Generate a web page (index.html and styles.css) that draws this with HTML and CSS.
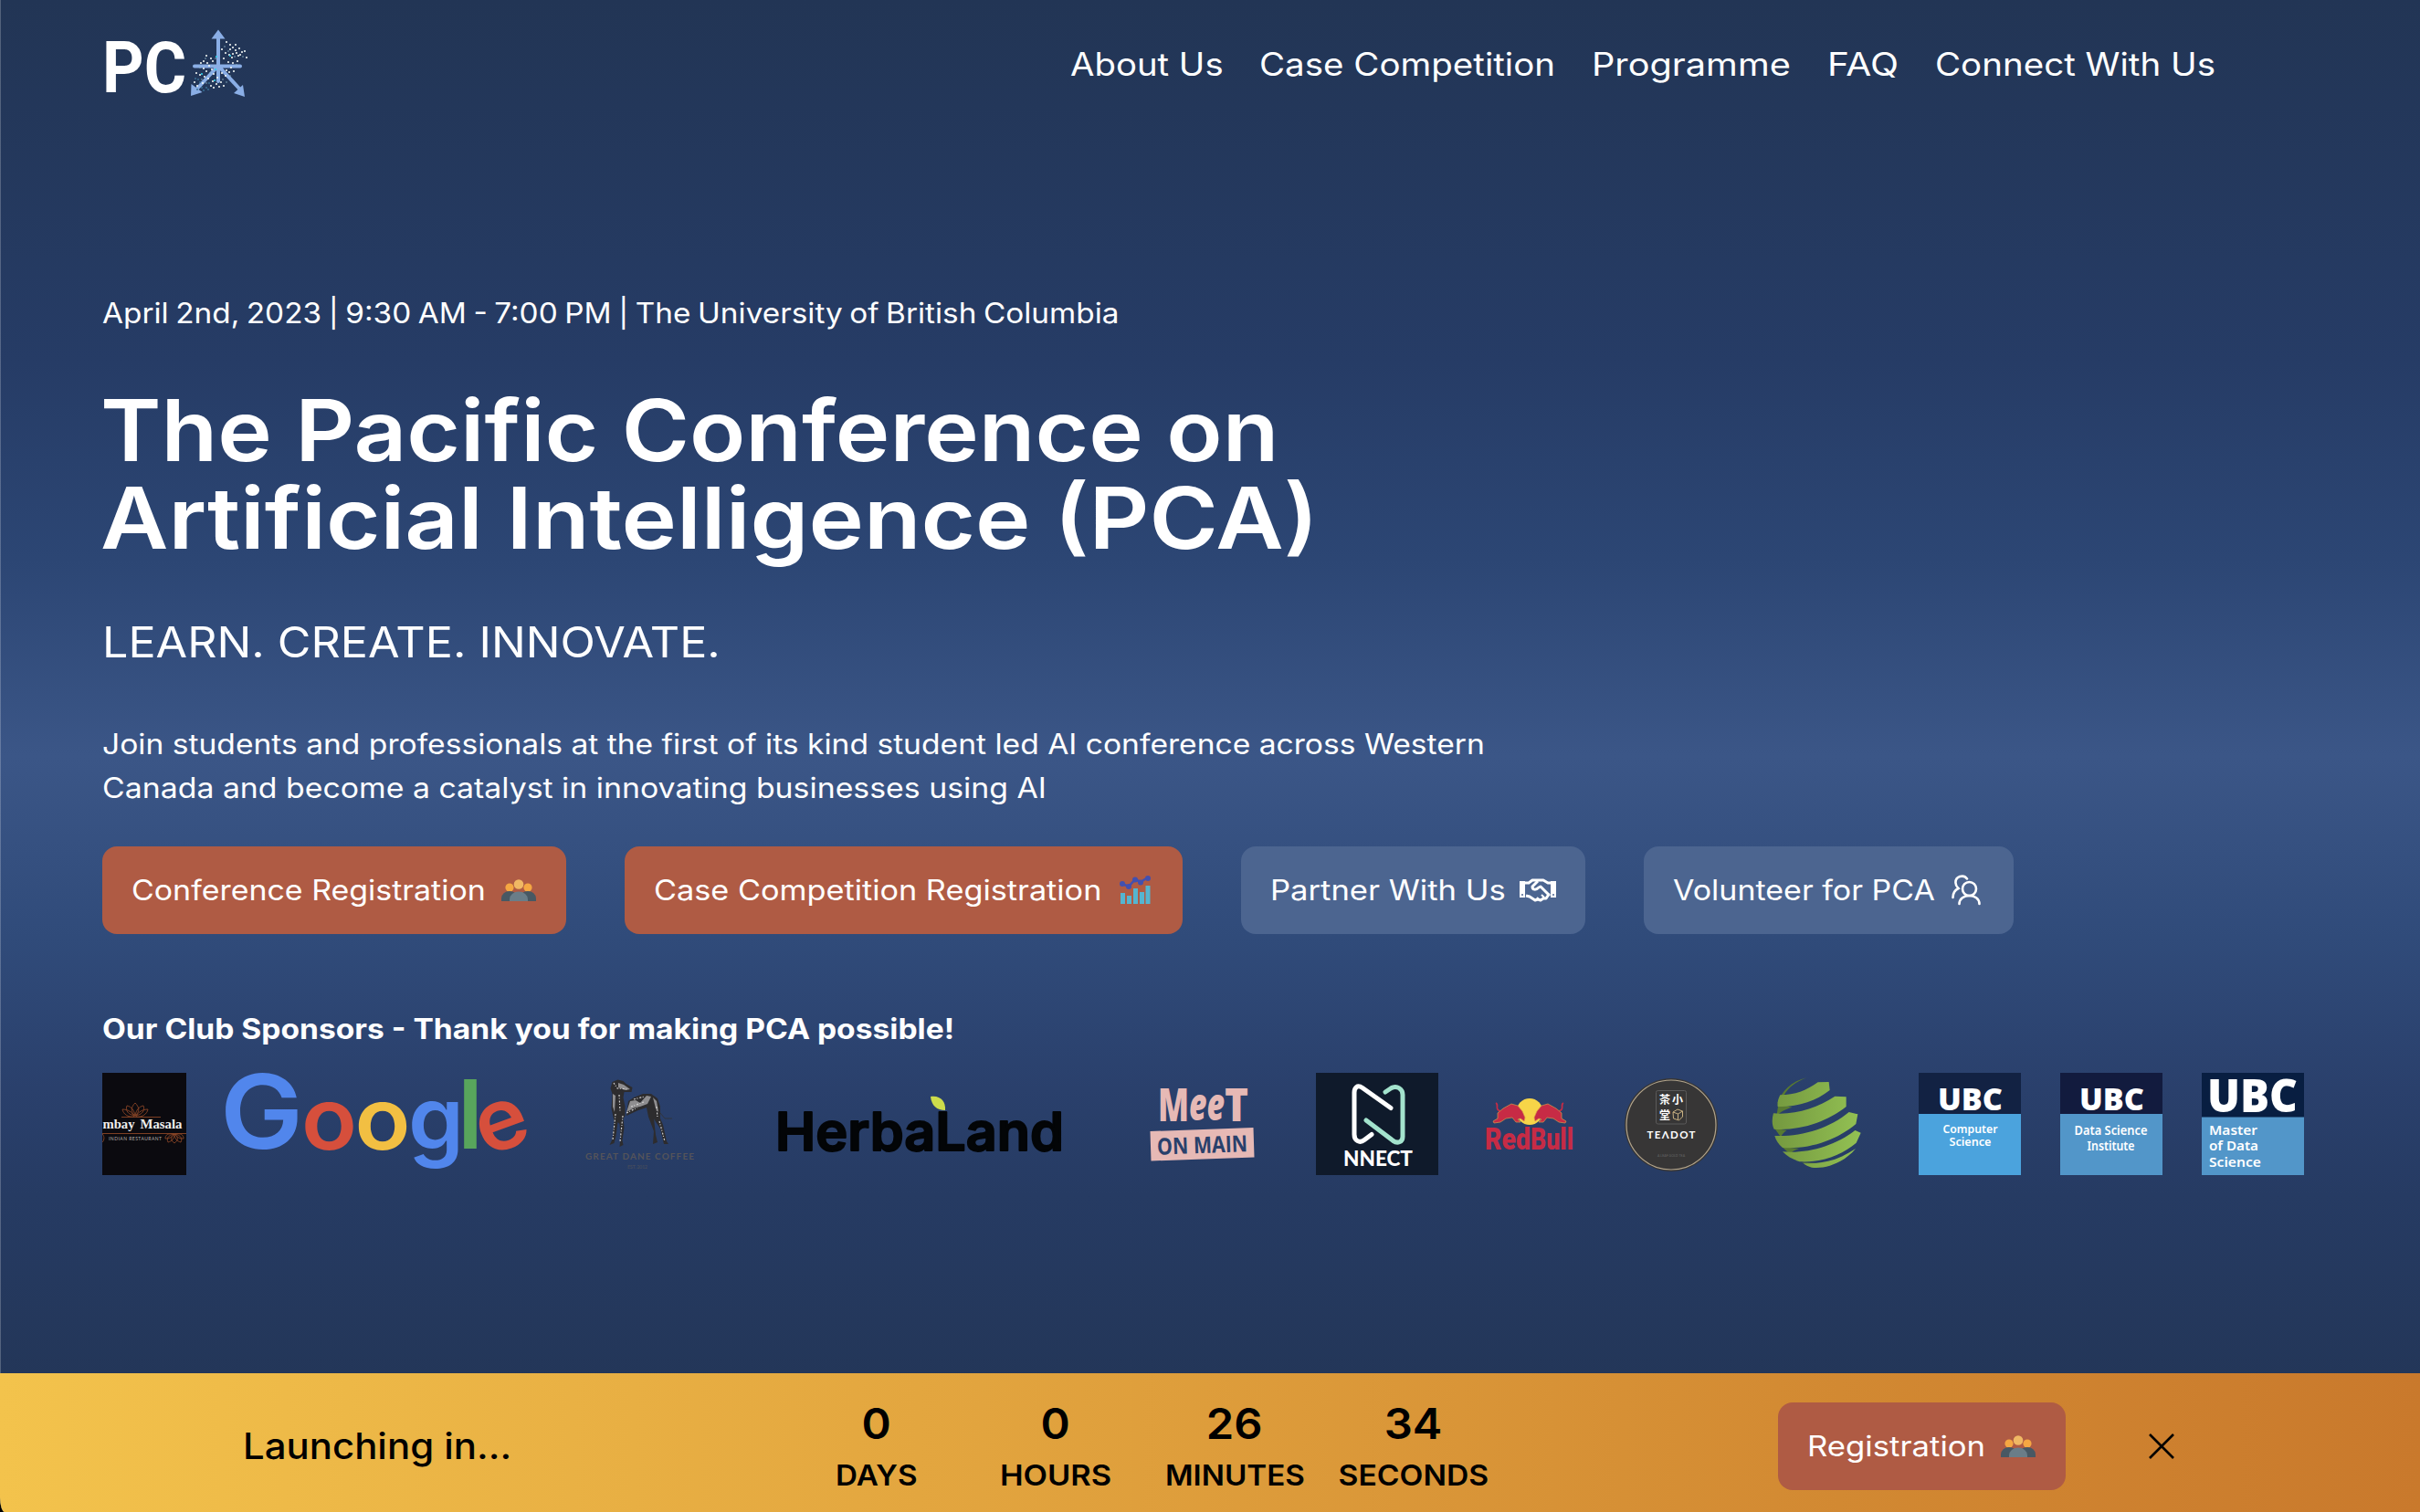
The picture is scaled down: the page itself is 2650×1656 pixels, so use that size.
FILE: index.html
```html
<!DOCTYPE html>
<html lang="en">
<head>
<meta charset="utf-8">
<title>Pacific Conference on Artificial Intelligence</title>
<link rel="stylesheet" href="styles.css">
</head>
<body>
<svg class="defs" aria-hidden="true">
  <symbol id="people" viewBox="0 0 38 24">
    <circle cx="9" cy="9" r="4.6" fill="#f5a742"/><circle cx="29" cy="9" r="4.6" fill="#f5a742"/>
    <path d="M0 24v-3a9 8 0 0 1 18 0v3zM20 24v-3a9 8 0 0 1 18 0v3z" fill="#485863"/>
    <circle cx="19" cy="5.5" r="5.3" fill="#f0b864"/>
    <path d="M9 24v-2a10 8.500 0 0 1 20 0v2z" fill="#6a7d88"/>
  </symbol>
</svg>
<div class="page">
  <header class="header">
    <svg class="logo" viewBox="112 28 160 84">
      <text x="112" y="100.500" font-size="77" textLength="92" lengthAdjust="spacingAndGlyphs" class="logo-text">PC</text>
      <g stroke="#8aaee6" stroke-width="4" fill="none" stroke-linecap="round">
        <path d="M239 40V89M213 72.500H263M239 72L216 97M239 72L262 97"/>
      </g>
      <g fill="#8aaee6"><path d="M239 32.500l7.500 10h-15zM209 105l.500-13 12 9zM268 106l-12-4 10-9z"/></g>
      <g fill="none" stroke-linecap="round">
        <path stroke="#f2f7f4" stroke-width="2.100" d="M248 46h0M252 49h0M258 49h0M243 54h0M252 54h0M255 52h0M258 55h0M262 53h0M247 58h0M251 60h0M255 59h0M259 58h0M263 60h0M265 57h0M270 63h0M268 56h0M261 61h0M254 63h0M245 64h0M226 61h0M231 64h0M223 67h0M220 69h0M227 69h0M233 67h0M229 72h0M223 75h0M226 78h0M215 80h0M219 82h0M224 84h0M232 76h0M234 81h0M238 85h0M243 80h0M247 83h0M228 86h0M233 89h0M237 92h0M231 94h0M234 96h0M240 95h0M245 94h0M242 90h0M248 77h0M253 74h0M251 79h0M256 78h0M250 68h0M255 69h0M260 67h0M213 90h0M216 94h0M222 91h0"/>
        <path stroke="#8fb6c8" stroke-width="1.500" d="M246 51h0M250 56h0M257 62h0M266 62h0M225 64h0M236 64h0M219 74h0M230 80h0M221 87h0M226 91h0M244 87h0M240 77h0M252 83h0M259 71h0M248 90h0M234 72h0"/>
        <path stroke="#2fd0ea" stroke-width="2.200" d="M237 62h0M221 81h0M236 76h0M252 61h0M235 88h0"/>
        <path stroke="#397195" stroke-width="2" d="M214 86h0M219 90h0M216 98h0M221 96h0M226 96h0M229 91h0M223 99h0M228 98h0M217 87h0"/>
      </g>
    </svg>
    <nav class="nav">
      <a class="n1"><span>About Us</span></a><a class="n2"><span>Case Competition</span></a><a class="n3"><span>Programme</span></a><a class="n4"><span>FAQ</span></a><a class="n5"><span>Connect With Us</span></a>
    </nav>
  </header>
  <main class="hero">
    <p class="date"><span>April 2nd, 2023 | 9:30 AM - 7:00 PM | The University of British Columbia</span></p>
    <h1><span class="line1">The Pacific Conference on</span><br><span class="line2">Artificial Intelligence (PCA)</span></h1>
    <p class="tagline"><span>LEARN. CREATE. INNOVATE.</span></p>
    <p class="intro"><span class="line1">Join students and professionals at the first of its kind student led AI conference across Western</span><br><span class="line2">Canada and become a catalyst in innovating businesses using AI</span></p>
    <div class="actions">
      <a class="btn b1"><span>Conference Registration</span><svg width="38" height="24"><use href="#people"/></svg></a>
      <a class="btn b2"><span>Case Competition Registration</span><svg width="34" height="32" viewBox="0 0 34 32"><path d="M1 31V19h5v12zM8 31v-9h5v9zM15 31V14h5v17zM22 31V18h5v13zM28.500 31V11h5v20z" fill="#55b5d0"/><path d="M3 9l7 3 7-8 6 3 8-5" fill="none" stroke="#4250b0" stroke-width="2.600"/><g fill="#4250b0"><circle cx="3" cy="9" r="3"/><circle cx="10" cy="12" r="3"/><circle cx="17" cy="4.500" r="3"/><circle cx="23" cy="7.500" r="3"/><circle cx="31" cy="3" r="3"/></g></svg></a>
      <a class="btn soft b3"><span>Partner With Us</span><svg width="40" height="26" viewBox="0 0 40 26"><g fill="none" stroke="#fff" stroke-width="3" stroke-linejoin="round"><path d="M10 5l4-3h12l5 3h7M7 19l4 1 6 4 3-1 3 1 3-2h3l2-3 2-2M2 5h9"/><path d="M20 3l-6 6c0 4 4 4 7 1l2-1 9 9"/><path d="M19 21l2 2M24 18l3 3" stroke-width="2"/></g><path d="M0 3h6v18H0zM34 3h6v18h-6z" fill="#fff"/><circle cx="3" cy="18" r="1" fill="#4c6590"/><circle cx="37" cy="18" r="1" fill="#4c6590"/></svg></a>
      <a class="btn soft b4"><span>Volunteer for PCA</span><svg width="32" height="34" viewBox="0 0 32 34"><g fill="none" stroke="#fff" stroke-width="2.600" stroke-linecap="round"><circle cx="19.500" cy="15.500" r="7.500"/><path d="M8.500 32c0-12 22-12 22 0"/><path d="M17 4.500C13-1 4 2 4.500 9c0 3 1 4 3 6-4 2-6 5-6 10"/></g></svg></a>
    </div>
    <h2><span>Our Club Sponsors - Thank you for making PCA possible!</span></h2>
    <div class="sponsors">
      <svg width="92" height="112" viewBox="112 1175 92 112"><rect x="112" y="1175" width="92" height="112" fill="#0b0a0f"/>
        <g fill="none" stroke="#8a4526" stroke-width=".9"><path d="M133 1223.500H176M112 1241.500H204"/><path d="M148 1222c-6-5-4-10 0-14 4 4 6 9 0 14zM148 1222c-8-1-11-6-9-11 5 1 8 5 9 11zM148 1222c8-1 11-6 9-11-5 1-8 5-9 11zM147 1223c-7 1-12-3-13-8 6 0 11 3 13 8zM149 1223c7 1 12-3 13-8-6 0-11 3-13 8z"/><path d="M191 1242c-5 4-4 7 0 10 4-3 5-6 0-10zM191 1242c-7 1-9 5-7 9 4-1 7-4 7-9zM191 1242c7 1 9 5 7 9-4-1-7-4-7-9zM190 1242c-6-1-9 1-9 5 4 0 7-1 9-5zM192 1242c6-1 9 1 9 5-4 0-7-1-9-5zM112 1242c3 3 2 7 0 9"/></g>
        <text x="112.500" y="1236" font-size="15" textLength="35" lengthAdjust="spacingAndGlyphs" class="serif">mbay</text><text x="153.500" y="1236" font-size="15" textLength="46" lengthAdjust="spacingAndGlyphs" class="serif">Masala</text>
        <text x="119" y="1248.500" font-size="5" textLength="58" class="sans" fill="#b5b0ad">INDIAN RESTAURANT</text></svg>
      <svg width="330" height="112" viewBox="247 1175 330 112" class="google">
        <text x="241" y="1258" font-size="113" textLength="91" lengthAdjust="spacingAndGlyphs" fill="#5186ec">G</text>
        <text x="330" y="1258.500" font-size="94" textLength="61" lengthAdjust="spacingAndGlyphs" fill="#d64f3c">o</text>
        <text x="388.500" y="1258.500" font-size="94" textLength="61" lengthAdjust="spacingAndGlyphs" fill="#f2bf42">o</text>
        <text x="447" y="1258.500" font-size="96" textLength="61" lengthAdjust="spacingAndGlyphs" fill="#5186ec">g</text>
        <text x="501" y="1258" font-size="105" textLength="28" lengthAdjust="spacingAndGlyphs" fill="#58a55c">l</text>
        <text x="521" y="1258.500" font-size="94" textLength="57" lengthAdjust="spacingAndGlyphs" fill="#d64f3c" transform="rotate(-20 550 1232)">e</text></svg>
      <svg width="162" height="112" viewBox="620 1175 162 112">
        <g fill="#2d2c2e">
          <path d="M668.500 1192l2-7 6-2.500 6 1.500 3 3 7 4-1 5-8 0-1 6 2 10 0 10-2 3 1 10-2 14 1 5-4 2 1-10-1-15-2-2-2 15-2 8-5 2 3-6 2-20-3-14 1-16z"/>
          <path d="M688 1206l6-4 10-4 9 0 7 5 3 9 0 13 3 7 4 18 2 3h-5l-4-17-6-9-1-2 2 18 2 8-5 2 1-14-6-16-2-10-9 3-13 6 1-9z"/>
        </g>
        <g fill="#8f8e90"><path d="M677 1186l6 2 7 5-5 1-8-3zM671 1198l3 2-1 18-2-6zM690 1206l6-1 5 3 7-8 5 1-4 8-8 3-6 1-9 5z"/><path d="M715 1202l4 4 2 12-3-4z"/></g>
        <g fill="none" stroke="#d0cfcf" stroke-width="1.200" stroke-dasharray="2 1.500 1 2"><path d="M672 1186l4 6 12 1M678 1199l1 18M674 1220l-3 28M682 1222l-3 28M691 1212l14-5M694 1204l12-3M719 1212l1 12M722 1228l6 22M686 1219l12-6"/></g>
        <path d="M723 1219l5 6h8" fill="none" stroke="#333" stroke-width=".8"/>
        <text x="641" y="1269.500" font-size="10" textLength="119" class="sans dane">GREAT DANE COFFEE</text>
        <text x="687" y="1280" font-size="5.500" textLength="22" class="sans dane" opacity=".6">EST. 2012</text></svg>
      <svg width="364" height="112" viewBox="825 1175 364 112">
        <text x="849" y="1260" font-size="58" textLength="316" lengthAdjust="spacingAndGlyphs" class="herba">HerbaLand</text>
        <path d="M1019 1201c10-2 17 5 16 15-9 0-15-5-16-15z" fill="#cddc4b"/></svg>
      <svg width="166" height="112" viewBox="1232 1175 166 112">
        <g class="meet"><text x="1268" y="1228" font-size="49" textLength="34" lengthAdjust="spacingAndGlyphs">M</text><text x="1302" y="1227" font-size="50" textLength="39" lengthAdjust="spacingAndGlyphs" font-style="italic">ee</text><text x="1341" y="1228" font-size="49" textLength="26" lengthAdjust="spacingAndGlyphs">T</text></g>
        <path d="M1259.500 1239l113-4 1 32.500-113 4z" fill="#e6b9b5"/>
        <text x="1267" y="1263" font-size="25" textLength="99" lengthAdjust="spacingAndGlyphs" class="onmain" transform="rotate(-2 1316 1254)">ON MAIN</text></svg>
      <svg width="134" height="112" viewBox="1441 1175 134 112"><rect x="1441" y="1175" width="134" height="112" fill="#0f1a2b"/>
        <g fill="none" stroke-width="5" stroke-linecap="round" stroke-linejoin="round"><path d="M1523 1213.500l-31-22c-6-4-9 0-9 5v46c0 7 6 10 11 6l8-6" stroke="#fff"/><path d="M1517 1196l6-4c7-4 13 1 13 7v46c0 6-6 8-11 4l-29-22" stroke="#a3e3cd"/></g>
        <text x="1471" y="1277" font-size="22" textLength="76" lengthAdjust="spacingAndGlyphs" class="nnect">NNECT</text></svg>
      <svg width="112" height="112" viewBox="1618 1175 112 112">
        <circle cx="1675" cy="1217.500" r="14.500" fill="#f6d548"/>
        <g id="bull"><path d="M1643 1217c-7-2-1-7-5-9" fill="none" stroke="#c72b45" stroke-width="1.800"/><path d="M1646 1214l9-5 7 2 5 6 3 7-1 4-4-3-3 1 3 3h-5l-4-5-7 1-6 4-7 1-1-2 5-3v-6z" fill="#c72b45" stroke="#d99a4a" stroke-width=".7"/></g><use href="#bull" transform="matrix(-1 0 0 1 3350 0)"/>
        <text x="1626" y="1258.500" font-size="34" textLength="50" lengthAdjust="spacingAndGlyphs" class="redbull">Red</text><text x="1676" y="1258.500" font-size="34" textLength="47" lengthAdjust="spacingAndGlyphs" class="redbull">Bull</text></svg>
      <svg width="114" height="112" viewBox="1773 1175 114 112">
        <circle cx="1830" cy="1232" r="51" fill="#373636"/><circle cx="1830" cy="1232" r="49" fill="none" stroke="#b3a58c" stroke-width="1.200"/>
        <rect x="1813.500" y="1194.500" width="33" height="36.500" rx="2" fill="none" stroke="#5b5a5a"/>
        <g class="cjk" font-size="12"><text x="1817" y="1209">茶</text><text x="1831" y="1209">小</text><text x="1817" y="1226">堂</text></g>
        <path d="M1832 1218l5-3 5.500 2v6l-4 4-6-2zM1832 1218l5.500 2 5-3M1837.500 1220v6" fill="none" stroke="#c9b182"/>
        <text x="1803.500" y="1247" font-size="11.500" textLength="53" class="sans tea">TEΛDOT</text>
        <text x="1815" y="1267" font-size="3.500" textLength="30" class="sans" fill="#666">A LEAF GOLD TEA</text></svg>
      <svg width="128" height="112" viewBox="1930 1175 128 112">
        <g transform="translate(1750 1160) scale(.33333)">
          <defs><linearGradient id="leaf" x1="0" x2="1"><stop offset="0" stop-color="#74983f"/><stop offset="1" stop-color="#93c153"/></linearGradient></defs>
          <g fill="#587a31"><path d="M686 61c-50 10-84 45-98 86l22-28c18-28 38-44 76-58zM592 150l46 8c-22 6-40 14-52 30zM580 228l40 6c-10 6-16 14-20 22zM604 288l56 6c-14 4-24 10-30 18zM668 340l66 2c-14 2-26 3-36 6z"/></g>
          <g fill="url(#leaf)"><path d="M598 118c50 0 85-14 124-42l36-1 3 27c-46 36-105 56-171 54-2-13 2-26 8-38zM576 178c70 6 145-18 202-56l37 2v32c-60 48-148 80-237 74-8-17-7-35-2-52zM580 252c85 4 180-24 244-78l29 7-6 32c-62 52-150 84-241 78-14-12-22-25-26-39zM606 304c80 8 175-20 238-70l19 8-15 33c-46 38-110 66-186 62-24-8-42-18-56-33zM674 342c70 4 122-14 172-48-36 44-96 68-144 62-12-3-21-8-28-14z"/></g>
        </g></svg>
      <svg width="112" height="112" viewBox="0 0 112 112" class="ubc"><rect width="112" height="112" fill="#4ba3dd"/><rect width="112" height="45" fill="#122243"/><text x="21" y="40.500" font-size="33" textLength="71" lengthAdjust="spacingAndGlyphs">UBC</text><g class="unit"><text x="26.500" y="66" font-size="13" textLength="60" lengthAdjust="spacingAndGlyphs">Computer</text><text x="33.500" y="79.500" font-size="13" textLength="46" lengthAdjust="spacingAndGlyphs">Science</text></g></svg>
      <svg width="112" height="112" viewBox="0 0 112 112" class="ubc"><rect width="112" height="112" fill="#5296c9"/><rect width="112" height="45" fill="#121b3e"/><text x="21" y="40.500" font-size="33" textLength="71" lengthAdjust="spacingAndGlyphs">UBC</text><g class="unit"><text x="15.500" y="67.500" font-size="14" textLength="80" lengthAdjust="spacingAndGlyphs">Data Science</text><text x="29.500" y="85" font-size="14" textLength="52" lengthAdjust="spacingAndGlyphs">Institute</text></g></svg>
      <svg width="112" height="112" viewBox="0 0 112 112" class="ubc"><rect width="112" height="112" fill="#5296c9"/><rect width="112" height="48.500" fill="#081e41"/><text x="6" y="42.500" font-size="49" textLength="99" lengthAdjust="spacingAndGlyphs">UBC</text><g class="unit"><text x="8" y="68" font-size="15" textLength="53" lengthAdjust="spacingAndGlyphs">Master</text><text x="8" y="85" font-size="15" textLength="54" lengthAdjust="spacingAndGlyphs">of Data</text><text x="8" y="102.500" font-size="15" textLength="57" lengthAdjust="spacingAndGlyphs">Science</text></g></svg>
    </div>
  </main>
  <footer class="bar">
    <p class="launch"><span>Launching in...</span></p>
    <div class="timer">
      <div><b>0</b><i class="days">DAYS</i></div><div><b>0</b><i class="hours">HOURS</i></div><div><b>26</b><i class="minutes">MINUTES</i></div><div><b>34</b><i class="seconds">SECONDS</i></div>
    </div>
    <a class="btn reg"><span>Registration</span><svg width="38" height="24"><use href="#people"/></svg></a>
    <svg class="close" width="28" height="28" viewBox="0 0 28 28"><path d="M1 1l26 26M27 1L1 27" stroke="#000" stroke-width="2.600"/></svg>
  </footer>
</div>
</body>
</html>
```
FILE: styles.css
```css
* { box-sizing: border-box; }
body { margin: 0; background: #000; font-family: Inter, sans-serif; color: #fff; }
p, h1, h2 { margin: 0; font-weight: 400; }
.defs { display: none; }
.page { width: 2650px; height: 1656px; display: flex; flex-direction: column; border-radius: 0 0 0 5px / 0 0 0 16px; overflow: hidden; background: linear-gradient(90deg, rgba(255,255,255,.22) 1px, transparent 1px), linear-gradient(180deg, #223555 0, #263c66 24%, #2c4674 37%, #3b5687 50%, #304b7a 62%, #2a406c 72%, #263b63 79%, #233658 92%); }

.nav span, .hero p span, .hero h1 span, .hero h2 span, .btn span, .launch span, .timer b, .timer i { display: inline-block; transform: scaleX(var(--wide, 1.09)); transform-origin: 0 50%; }

.header { height: 142px; padding: 0 223px 3px 112px; display: flex; justify-content: space-between; align-items: center; }
.logo { width: 160px; height: 84px; overflow: visible; margin-top: 1px; }
.logo-text { font-family: Roboto, sans-serif; font-weight: 700; fill: #fff; }
.nav { display: flex; gap: 40px; font-size: 35px; white-space: nowrap; }
.n1 { width: 167px; --wide: 1.095; }
.n2 { width: 324px; --wide: 1.1; }
.n3 { width: 218px; --wide: 1.135; }
.n4 { width: 78px; --wide: 1.16; }
.n5 { width: 308px; --wide: 1.1; }

.hero { height: 1362px; padding: 177px 0 0 112px; white-space: nowrap; }
.date { font-size: 31px; line-height: 48px; word-spacing: -1.7px; --wide: 1.0755; }
h1 { margin-top: 56px; font-size: 93px; line-height: 96px; font-weight: 600; }
h1 span { margin-left: -2px; }
h1 .line1 { --wide: 1.084; }
h1 .line2 { --wide: 1.1; }
.tagline { margin-top: 52px; font-size: 46px; line-height: 72px; --wide: 1.091; }
.intro { margin-top: 52px; font-size: 31px; line-height: 48px; }
.intro .line1 { --wide: 1.0835; }
.intro .line2 { --wide: 1.091; }
.actions { margin-top: 40px; display: flex; gap: 64px; }
.btn { height: 96px; padding: 0 33px 0 32px; border-radius: 16px; background: #af5b44; color: #fff; font-size: 31px; display: flex; align-items: center; justify-content: space-between; white-space: nowrap; }
.btn span { margin-top: -2px; }
.soft { background: #4c6590; }
.b1 { width: 508px; --wide: 1.094; }
.b2 { width: 611px; padding-right: 35px; --wide: 1.105; }
.b3 { width: 377px; padding-right: 32px; --wide: 1.116; }
.b4 { width: 405px; padding-right: 36px; --wide: 1.096; }
h2 { margin-top: 80px; font-size: 31px; line-height: 48px; font-weight: 700; --wide: 1.083; }
.sponsors { margin-top: 24px; display: flex; gap: 43px; }
.sponsors svg { flex: none; }

.sans { font-family: Lato, sans-serif; }
.serif { font-family: "Liberation Serif", serif; font-weight: 700; fill: #eee; }
.google { font-family: Inter, sans-serif; font-weight: 600; overflow: visible; }
.dane { fill: #55545a; font-weight: 700; }
.herba { font-family: Inter, sans-serif; font-weight: 600; fill: #030507; stroke: #030507; stroke-width: 2; stroke-linejoin: round; }
.meet { font-family: "Open Sans", sans-serif; font-weight: 800; fill: #e6b9b5; }
.onmain { font-family: "Open Sans", sans-serif; font-weight: 700; fill: #29406b; }
.nnect { font-family: Lato, sans-serif; font-weight: 900; fill: #fff; }
.redbull { font-family: Roboto, sans-serif; font-weight: 900; fill: #c72b45; }
.cjk { font-family: "Noto Sans CJK TC", sans-serif; font-weight: 700; fill: #fff; }
.tea { fill: #fff; font-weight: 700; }
.ubc { font-family: "Open Sans", sans-serif; font-weight: 800; fill: #fff; }
.unit { font-family: "Noto Sans", sans-serif; font-weight: 600; }

.bar { height: 152px; padding: 8px 0 0 266px; display: flex; align-items: center; color: #000; background: linear-gradient(90deg, #f3c34c, #e3a63f 38%, #d28932 76%, #c9792c); }
.launch { width: 596px; margin-top: -2px; font-size: 39px; font-weight: 500; --wide: 1.075; }
.timer { width: 1085px; display: flex; }
.timer div { width: 196px; display: flex; flex-direction: column; align-items: center; }
.timer b, .timer i { transform-origin: 50% 50%; }
.timer b { font-size: 47px; line-height: 60px; font-weight: 600; --wide: 1.04; }
.timer i { margin-top: 3px; font-style: normal; font-size: 31px; line-height: 48px; font-weight: 600; }
.days { --wide: 1.07; }
.hours { --wide: 1.11; }
.minutes { --wide: 1.07; }
.seconds { --wide: 1.085; }
.reg { width: 315px; --wide: 1.12; }
.close { margin-left: 91px; }
```
